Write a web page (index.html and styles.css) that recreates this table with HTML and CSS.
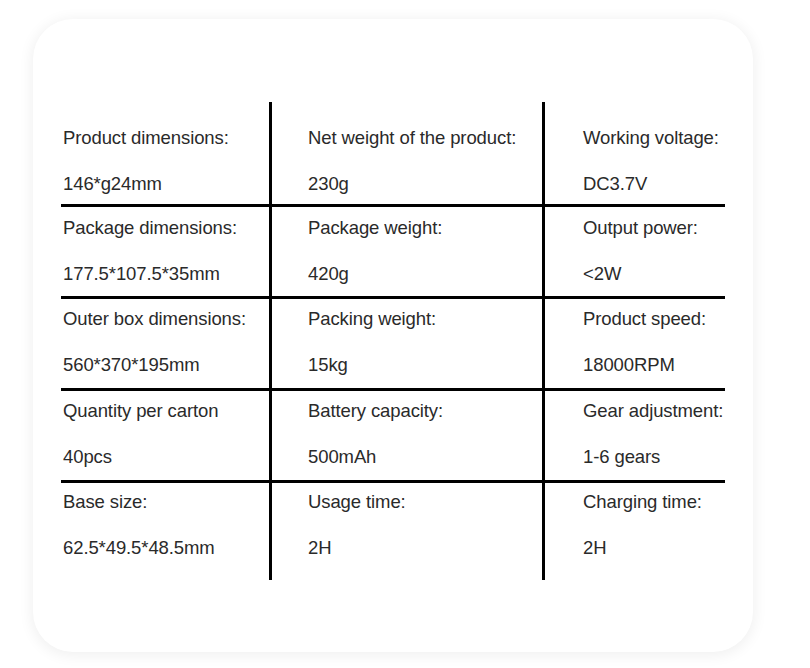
FILE: index.html
```html
<!DOCTYPE html>
<html lang="en">
<head>
<meta charset="utf-8">
<title>Specifications</title>
<link rel="stylesheet" href="styles.css">
</head>
<body>
<div class="card">
  <div class="spec-grid">
    <div class="cell c1 r1"><div class="label">Product dimensions:</div><div class="value">146*g24mm</div></div>
    <div class="cell c2 r1"><div class="label">Net weight of the product:</div><div class="value">230g</div></div>
    <div class="cell c3 r1"><div class="label">Working voltage:</div><div class="value">DC3.7V</div></div>

    <div class="cell c1 r2"><div class="label">Package dimensions:</div><div class="value">177.5*107.5*35mm</div></div>
    <div class="cell c2 r2"><div class="label">Package weight:</div><div class="value">420g</div></div>
    <div class="cell c3 r2"><div class="label">Output power:</div><div class="value">&lt;2W</div></div>

    <div class="cell c1 r3"><div class="label">Outer box dimensions:</div><div class="value">560*370*195mm</div></div>
    <div class="cell c2 r3"><div class="label">Packing weight:</div><div class="value">15kg</div></div>
    <div class="cell c3 r3"><div class="label">Product speed:</div><div class="value">18000RPM</div></div>

    <div class="cell c1 r4"><div class="label">Quantity per carton</div><div class="value">40pcs</div></div>
    <div class="cell c2 r4"><div class="label">Battery capacity:</div><div class="value">500mAh</div></div>
    <div class="cell c3 r4"><div class="label">Gear adjustment:</div><div class="value">1-6 gears</div></div>

    <div class="cell c1 r5"><div class="label">Base size:</div><div class="value">62.5*49.5*48.5mm</div></div>
    <div class="cell c2 r5"><div class="label">Usage time:</div><div class="value">2H</div></div>
    <div class="cell c3 r5"><div class="label">Charging time:</div><div class="value">2H</div></div>
  </div>
</div>
</body>
</html>
```

FILE: styles.css
```css
html, body {
  margin: 0;
  padding: 0;
  background: #ffffff;
}

body {
  font-family: "Liberation Sans", Arial, sans-serif;
  width: 810px;
  height: 668px;
  overflow: hidden;
}

.card {
  margin: 19px 0 0 33px;
  width: 720px;
  height: 633px;
  box-sizing: border-box;
  padding: 83px 0 0 28px;
  background: #ffffff;
  border-radius: 40px;
  box-shadow: 0 2px 14px 2px rgba(0, 0, 0, 0.06);
}

.spec-grid {
  display: grid;
  width: 664px;
  grid-template-columns: 208px 270px 180px;
  grid-template-rows: 102px 89px 89px 89px 97px;
  gap: 3px;
  background: #000000;
}

.cell {
  background: #ffffff;
  color: #2a2a2a;
  font-size: 18.5px;
  line-height: 22px;
  letter-spacing: -0.1px;
  white-space: nowrap;
}

.r1 { padding-top: 25px; }
.r2 { padding-top: 10px; }
.r3 { padding-top: 9px; }
.r4 { padding-top: 9px; }
.r5 { padding-top: 8px; }

.c1 { padding-left: 2px; }
.c2 { padding-left: 36px; }
.c3 { padding-left: 38px; }

.value {
  margin-top: 24px;
}
```
